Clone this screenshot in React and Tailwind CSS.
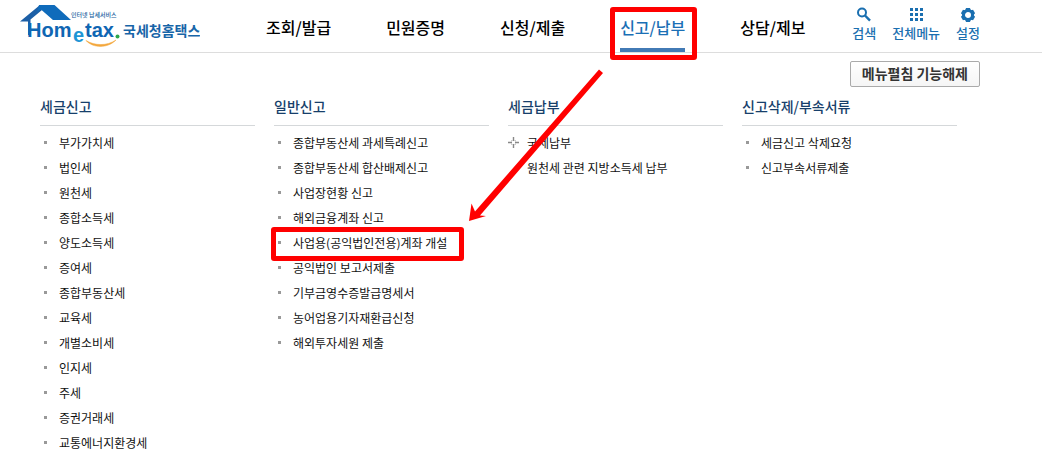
const navItems = ['조회/발급', '민원증명', '신청/제출', '신고/납부', '상담/제보'];

const menuColumns = [
  {
    title: '세금신고',
    items: [
      '부가가치세',
      '법인세',
      '원천세',
      '종합소득세',
      '양도소득세',
      '증여세',
      '종합부동산세',
      '교육세',
      '개별소비세',
      '인지세',
      '주세',
      '증권거래세',
      '교통에너지환경세',
    ],
  },
  {
    title: '일반신고',
    items: [
      '종합부동산세 과세특례신고',
      '종합부동산세 합산배제신고',
      '사업장현황 신고',
      '해외금융계좌 신고',
      '사업용(공익법인전용)계좌 개설',
      '공익법인 보고서제출',
      '기부금영수증발급명세서',
      '농어업용기자재환급신청',
      '해외투자세원 제출',
    ],
  },
  { title: '세금납부', items: ['국세납부', '원천세 관련 지방소득세 납부'] },
  { title: '신고삭제/부속서류', items: ['세금신고 삭제요청', '신고부속서류제출'] },
];

const markers = { 국세납부: 'plus', '원천세 관련 지방소득세 납부': 'none' };

function Logo() {
  return (
    <svg className="h-12 w-[180px]" viewBox="0 0 180 48" role="img" aria-label="Hometax 국세청홈택스">
      <path d="M0 21.5 20 5 22 10 10.5 19.5V35H8V21.5Z" fill="#1c5fa6" />
      <path d="M19 5H34.5L51 20H33L21 9.5 17 12Z" fill="#0f6bbb" />
      <g fontFamily="'Liberation Sans', Arial, sans-serif" fontSize="20" fontWeight="700" fill="#0f66b3">
        <text x="7" y="37">Hom</text>
        <text x="53" y="42" fill="#1d96d6">e</text>
        <text x="65" y="37">tax</text>
      </g>
      <circle cx="97.5" cy="36.5" r="2" fill="#2ba84a" />
      <path d="M66 40.5C73 48.5 88 48.5 96 40C87 46 75 46 66 40.5Z" fill="#f3a63b" stroke="#f3a63b" strokeWidth="0.5" />
      <g fontFamily="'Noto Sans CJK KR', sans-serif">
        <text x="51" y="17" fontSize="6" fontWeight="500" fill="#1a5fa0">인터넷 납세서비스</text>
        <text x="103" y="36" fontSize="14" fontWeight="700" fill="#1765a8">국세청홈택스</text>
      </g>
    </svg>
  );
}

function SearchIcon() {
  return (
    <svg aria-hidden="true" className="h-4 w-4" fill="none" viewBox="0 0 16 16">
      <circle cx="6" cy="5.5" r="4" stroke="currentColor" strokeWidth="2" />
      <path d="m9 8.5 5 5.2" stroke="currentColor" strokeWidth="2.4" />
    </svg>
  );
}

function GridIcon() {
  return (
    <svg aria-hidden="true" className="h-4 w-4" fill="currentColor" viewBox="0 0 16 16">
      {[1, 6, 11].map((y) =>
        [2, 7, 12].map((x) => <rect key={`${x}-${y}`} x={x} y={y} width="3" height="3" />)
      )}
    </svg>
  );
}

function GearIcon() {
  return (
    <svg aria-hidden="true" className="h-4 w-4" fill="none" viewBox="0 0 16 16">
      <circle cx="8" cy="8" r="4.5" stroke="currentColor" strokeWidth="3" />
      {[0, 60, 120, 180, 240, 300].map((angle) => (
        <path key={angle} d="M6 1h4l1 3h-6Z" fill="currentColor" transform={`rotate(${angle} 8 8)`} />
      ))}
    </svg>
  );
}

function Utility({ icon, label }) {
  return (
    <button type="button" className="flex flex-col items-center text-[13px] leading-5 font-medium text-[#1a6fb0]">
      {icon}
      {label}
    </button>
  );
}

function Marker({ type }) {
  if (type === 'none') return <span className="w-[19px]" />;
  if (type === 'plus') {
    return (
      <span className="w-[19px]">
        <svg aria-hidden="true" className="h-[11px] w-[11px]" viewBox="0 0 11 11">
          <path d="M5.5 0v4M5.5 7v4M0 5.5h4M7 5.5h4" stroke="#888" strokeWidth="1.4" />
          <path d="M4 3v1H3M7 3v1h1M4 8V7H3M7 8V7h1" fill="none" stroke="#aaa" strokeWidth="0.7" />
        </svg>
      </span>
    );
  }
  return (
    <span className="w-[19px] pl-1">
      <span className="block h-[3px] w-[3px] bg-[#999]" />
    </span>
  );
}

function MenuColumn({ title, items }) {
  return (
    <section>
      <h2 className="border-b border-[#d5d8da] pb-[9px] text-sm leading-5 font-medium text-[#173f6b]">{title}</h2>
      <ul className="pt-1">
        {items.map((item) => (
          <li key={item} className="flex h-[25px] items-center text-xs whitespace-nowrap text-[#111]">
            <Marker type={markers[item]} />
            <a href="#" className="relative">
              {item}
              {item.startsWith('사업용') && (
                <span className="absolute -top-2 -right-[17px] -bottom-[10px] -left-[22px] rounded-[3px] border-5 border-[#f00]" />
              )}
            </a>
          </li>
        ))}
      </ul>
    </section>
  );
}

function Arrow() {
  return (
    <svg
      aria-hidden="true"
      className="pointer-events-none absolute top-[68px] left-[466px] h-[156px] w-[138px]"
      viewBox="466 68 138 156"
    >
      <path d="M599 69.5 603 73 480 215.5 486 216 469 221 471.5 203.5 475 211.5Z" fill="#f00" />
    </svg>
  );
}

export default function App() {
  return (
    <div className="relative bg-white font-['Noto_Sans_CJK_KR',sans-serif]">
      <header className="flex h-[53px] border-b border-[#ddd] pr-[62px] pl-5">
        <a href="#" className="shrink-0">
          <Logo />
        </a>
        <nav className="ml-[66px] flex gap-[55px]">
          {navItems.map((item) => (
            <a
              key={item}
              href="#"
              className={
                item === '신고/납부'
                  ? 'relative border-b-4 border-[#427ab5] pt-[15px] text-base leading-6 font-medium whitespace-nowrap text-[#1a6fb5]'
                  : 'pt-[15px] text-base leading-6 font-medium whitespace-nowrap text-black'
              }
            >
              {item}
              {item === '신고/납부' && (
                <span className="absolute top-[7px] -right-3 -bottom-3 -left-[10px] rounded-[3px] border-5 border-[#f00]" />
              )}
            </a>
          ))}
        </nav>
        <div className="ml-auto flex gap-4 pt-[7px]">
          <Utility icon={<SearchIcon />} label="검색" />
          <Utility icon={<GridIcon />} label="전체메뉴" />
          <Utility icon={<GearIcon />} label="설정" />
        </div>
      </header>

      <div className="flex justify-end pt-2 pr-[62px]">
        <button
          type="button"
          className="flex h-[26px] rounded-[2px] border border-[#aaa] bg-linear-to-b from-white to-[#f5f5f5] px-[11px] pt-px text-sm leading-5 font-bold text-[#333]"
        >
          메뉴펼침 기능해제
        </button>
      </div>

      <main className="grid grid-cols-4 gap-[19px] pt-[9px] pr-[85px] pl-10">
        {menuColumns.map((column) => (
          <MenuColumn key={column.title} title={column.title} items={column.items} />
        ))}
      </main>
      <Arrow />
    </div>
  );
}
